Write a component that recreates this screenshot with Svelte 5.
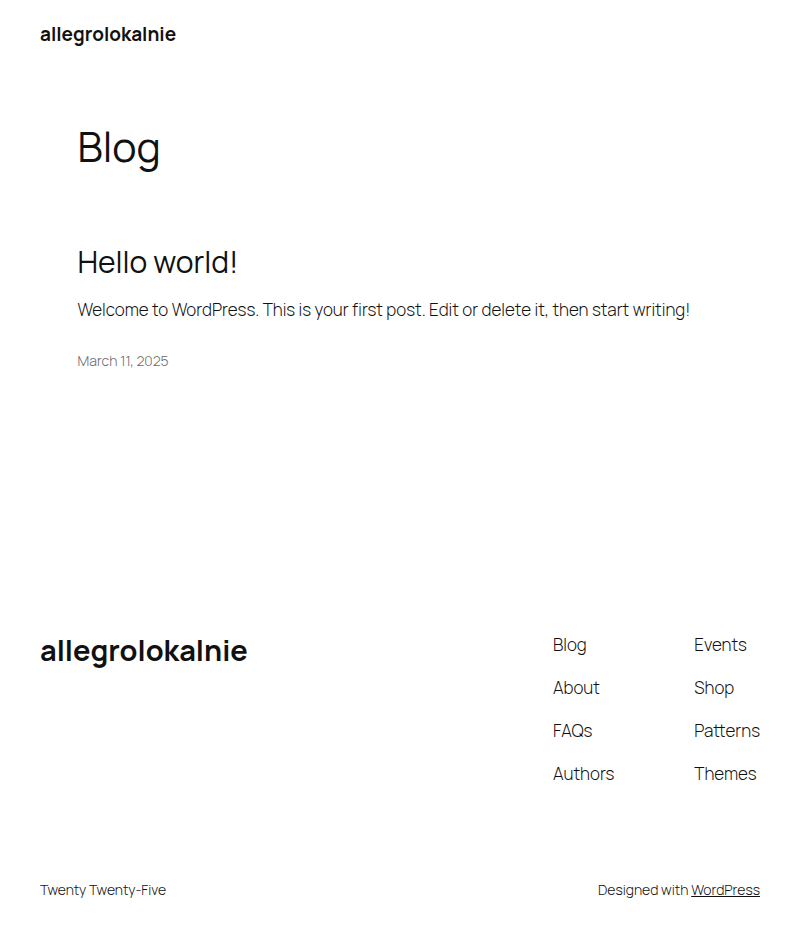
<script>
  const columns = [
    ['Blog', 'About', 'FAQs', 'Authors'],
    ['Events', 'Shop', 'Patterns', 'Themes'],
  ];
</script>

<div class="site">
  <header>
    <a class="brand" href="#home">allegrolokalnie</a>
  </header>

  <main>
    <h1>Blog</h1>
    <article>
      <h2><a href="#hello-world">Hello world!</a></h2>
      <p>Welcome to WordPress. This is your first post. Edit or delete it, then start writing!</p>
      <a class="date" href="#hello-world"><time datetime="2025-03-11">March 11, 2025</time></a>
    </article>
  </main>

  <footer>
    <div class="top">
      <a class="title" href="#home">allegrolokalnie</a>
      <div class="menus">
        {#each columns as links}
          <nav>
            {#each links as link}
              <a href="#{link.toLowerCase()}">{link}</a>
            {/each}
          </nav>
        {/each}
      </div>
    </div>
    <div class="credits">
      <span>Twenty Twenty-Five</span>
      <span>Designed with <a href="#wordpress">WordPress</a></span>
    </div>
  </footer>
</div>

<style>
  :global(body) {
    margin: 0;
    background: #fff;
  }
  .site {
    color: #111;
    font-family: Manrope, Inter, 'Open Sans', sans-serif;
    font-size: 17px;
    font-weight: 300;
    line-height: 24px;
  }
  a {
    color: inherit;
    text-decoration: none;
  }
  header {
    padding: 20px 40px;
  }
  .brand {
    display: block;
    font-size: 19px;
    font-weight: 700;
    line-height: 28px;
  }
  main {
    max-width: 645px;
    margin: 0 auto;
    padding: 54px 40px 0;
  }
  h1 {
    margin: 0;
    font-size: 41px;
    font-weight: 400;
    line-height: 48px;
  }
  article {
    padding: 74px 0 72px;
  }
  h2 {
    margin: 0;
    font-size: 30px;
    font-weight: 400;
    line-height: 36px;
  }
  p {
    margin: 18px 0 29px;
  }
  .date {
    display: block;
    color: #686868;
    font-size: 14px;
    line-height: 20px;
  }
  footer {
    padding: 190px 40px 40px;
  }
  .top,
  .credits {
    display: flex;
    justify-content: space-between;
  }
  .title {
    font-size: 29px;
    font-weight: 700;
    line-height: 34px;
  }
  .menus {
    display: flex;
    gap: 80px;
  }
  nav {
    display: flex;
    flex-direction: column;
    gap: 19px;
  }
  .credits {
    margin-top: 94px;
    font-size: 14px;
    line-height: 20px;
  }
  .credits a {
    text-decoration: underline;
  }
</style>
